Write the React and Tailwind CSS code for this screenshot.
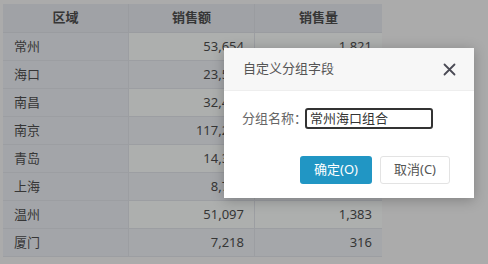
import React from "react";

const rows = [
  ["常州", "53,654", "1,821"],
  ["海口", "23,518", "792"],
  ["南昌", "32,406", "1,105"],
  ["南京", "117,285", "3,947"],
  ["青岛", "14,362", "488"],
  ["上海", "8,731", "297"],
  ["温州", "51,097", "1,383"],
  ["厦门", "7,218", "316"],
];

export default function App() {
  const font = { fontFamily: '"Noto Sans", "Noto Sans CJK SC", sans-serif' };
  return (
    <div className="relative w-[488px] h-[264px] overflow-hidden bg-[#ababab]" style={font}>
      <div className="pt-[4px] pl-[3px]">
        <div className="grid grid-cols-[126px_126px_127px] w-[379px] text-[13px] text-[#363636]">
          <div className="h-[29px] flex items-center justify-center bg-[#a0a2a6] font-bold border-r border-b border-[#9a9ca0]">区域</div>
          <div className="h-[29px] flex items-center justify-center bg-[#a0a2a6] font-bold border-r border-b border-[#9a9ca0]">销售额</div>
          <div className="h-[29px] flex items-center justify-center bg-[#a0a2a6] font-bold border-b border-[#9a9ca0]">销售量</div>
          {rows.map((r, i) => {
            const odd = i % 2 === 0;
            const dataBg = odd ? "bg-[#adafae]" : "bg-[#a5a7aa]";
            return (
              <React.Fragment key={i}>
                <div className="h-[28px] flex items-center pl-[11px] bg-[#a3a5a9] border-r border-b border-[#9c9ea2]">{r[0]}</div>
                <div className={`h-[28px] flex items-center justify-end pr-[10px] ${dataBg} border-r border-b border-[#9c9ea2]`}>{r[1]}</div>
                <div className={`h-[28px] flex items-center justify-end pr-[10px] ${dataBg} border-b border-[#9c9ea2]`}>{r[2]}</div>
              </React.Fragment>
            );
          })}
        </div>
      </div>

      <div className="absolute left-[224px] top-[48px] w-[250px] h-[150px] bg-white shadow-[0_2px_12px_rgba(0,0,0,0.25)] flex flex-col">
        <div className="h-[43px] bg-[#f7f7f7] border-b border-[#eeeeee] flex items-center justify-between pl-[19px] pr-[18px]">
          <span className="text-[13px] text-[#555555]">自定义分组字段</span>
          <svg width="13" height="13" viewBox="0 0 13 13" className="text-[#4a4a55]">
            <path d="M1.5 1.5 L11.5 11.5 M11.5 1.5 L1.5 11.5" stroke="currentColor" strokeWidth="1.8" strokeLinecap="round" />
          </svg>
        </div>
        <div className="flex items-center pl-[18px] mt-[17px]">
          <span className="text-[13px] text-[#666666] w-[63px] whitespace-nowrap">分组名称：</span>
          <div className="w-[128px] h-[21px] border-2 border-[#333333] rounded-[3px] flex items-center pl-[3px] text-[13px] text-[#333333] leading-none whitespace-nowrap">常州海口组合</div>
        </div>
        <div className="flex justify-end gap-[8px] pr-[24px] mt-[27px]">
          <button className="w-[72px] h-[28px] rounded-[3px] bg-[#2196c4] text-white text-[13px]">确定(O)</button>
          <button className="w-[70px] h-[28px] rounded-[3px] bg-white border border-[#e3e3e3] text-[#555555] text-[13px]">取消(C)</button>
        </div>
      </div>
    </div>
  );
}
